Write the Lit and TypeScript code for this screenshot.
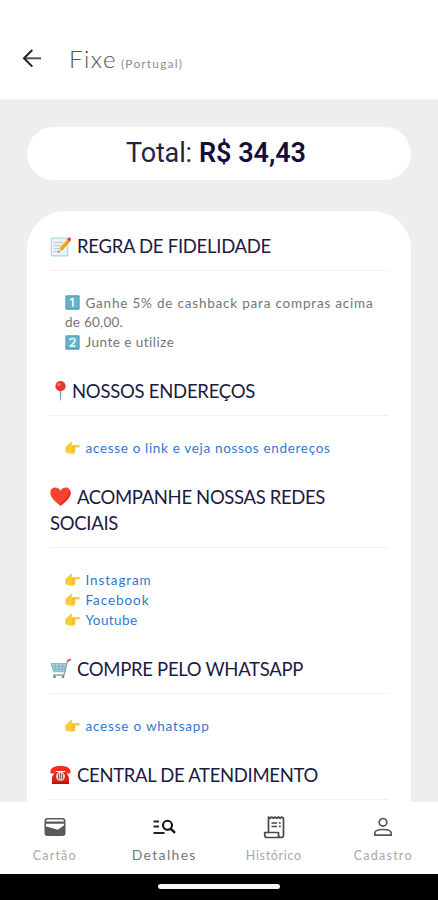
import { LitElement, html, svg, css, nothing, TemplateResult } from "lit";
import { customElement } from "lit/decorators.js";

interface Run { text: string; width: number; icon?: string }
interface Section { heading: Run[]; body: Run[]; kind: "note" | "link" }

const sections: Section[] = [
  {
    kind: "note",
    heading: [{ icon: "memo", text: "REGRA DE FIDELIDADE", width: 194 }],
    body: [
      { icon: "one", text: "Ganhe 5% de cashback para compras acima", width: 288 },
      { text: "de 60,00.", width: 58 },
      { icon: "two", text: "Junte e utilize", width: 89 },
    ],
  },
  {
    kind: "link",
    heading: [{ icon: "pin", text: "NOSSOS ENDEREÇOS", width: 183 }],
    body: [{ icon: "hand", text: "acesse o link e veja nossos endereços", width: 245 }],
  },
  {
    kind: "link",
    heading: [
      { icon: "heart", text: "ACOMPANHE NOSSAS REDES", width: 248 },
      { text: "SOCIAIS", width: 68 },
    ],
    body: [
      { icon: "hand", text: "Instagram", width: 66 },
      { icon: "hand", text: "Facebook", width: 64 },
      { icon: "hand", text: "Youtube", width: 52 },
    ],
  },
  {
    kind: "link",
    heading: [{ icon: "cart", text: "COMPRE PELO WHATSAPP", width: 226 }],
    body: [{ icon: "hand", text: "acesse o whatsapp", width: 124 }],
  },
  {
    kind: "link",
    heading: [{ icon: "phone", text: "CENTRAL DE ATENDIMENTO", width: 241 }],
    body: [],
  },
];

const keycap = (d: string) => svg`
  <rect x=".5" y=".5" width="20" height="20" rx="1.5" fill="#4a9fba"/>
  <rect x="2" y="2" width="17" height="16.5" rx="1" fill="#65b3c9"/>
  <path d=${d} fill="none" stroke="#e8f6fa" stroke-width="2.4" stroke-linejoin="round"/>`;

const glyphs: Record<string, TemplateResult> = {
  memo: svg`
    <rect x=".8" y="1.5" width="17.6" height="19" rx="1" fill="#a9d9e8"/>
    <rect x="2" y="2.6" width="15.2" height="16.6" fill="#e9f3f4"/>
    <path d="M4 6.5h9M4 9.5h7M4 12.5h5M4 15.5h4" stroke="#b3ced6" stroke-width="1"/>
    <path d="M8 16.8 9.3 12 17 3.4l2.7 2.3L12 14.5z" fill="#f9b32b"/>
    <path d="M10.6 13.3 18.3 4.6l1.4 1.1L12 14.5z" fill="#ee9420"/>
    <path d="M8 16.8 9.3 12l2.7 2.5z" fill="#f5d3a0"/><path d="m8 16.8.5-1.9 1.1 1z" fill="#444"/>
    <path d="m17 3.4 1.5-1.8q.6-.6 1.3 0l1.2 1q.6.6 0 1.3l-1.3 1.8z" fill="#e5414c"/>`,
  one: keycap("M7.2 7 11 4.9V16.5"),
  two: keycap("M6.6 7.4Q7.2 4.8 10.4 4.8 14 4.8 14 7.7 14 10 7.2 15.6H14.6"),
  pin: svg`
    <path d="M9.6 10h1.8l-.5 10.4h-.8z" fill="#67a9bf"/>
    <circle cx="10.5" cy="6.2" r="5.1" fill="#e8392f"/>
    <circle cx="9" cy="4.4" r="1.5" fill="#ff8178"/>`,
  heart: svg`
    <path d="M10.5 19.8C6 16.4.4 12.2.4 6.8.4 3.5 2.7 1.6 5.3 1.6c2.3 0 4.3 1.3 5.2 3.4.9-2.1 2.9-3.4 5.2-3.4 2.6 0 4.900 1.900 4.900 5.200 0 5.400-5.600 9.600-10.100 13z" fill="#f8412f"/>
    <path d="M18.7 4.2c.7 5.5-3.4 9.4-8.2 13.2v2.400c4.500-3.400 10.100-7.600 10.100-13 0-1-.6-2-1.900-2.600z" fill="#e32f28"/>`,
  cart: svg`
    <path d="M1 5.500h15.600l-1.900 8.300H3.600z" fill="#a9d4dc"/>
    <path d="M1 5.500h15.600l-1.900 8.300H3.600zM1.700 8.300h14.200M2.600 11h12.600M5 5.500l1 8.300M9 5.500v8.300M13 5.500l-1 8.300" fill="none" stroke="#79afb9" stroke-width=".8"/>
    <path d="M19.500 2.200 17.600 3 14 17H3.400" fill="none" stroke="#8fa5ab" stroke-width="1.300"/>
    <path d="m18 2.700 2.300-1" stroke="#e5565b" stroke-width="2" stroke-linecap="round"/>
    <circle cx="4.500" cy="18.800" r="1.400" fill="#6b8b93"/><circle cx="13" cy="18.800" r="1.400" fill="#6b8b93"/>`,
  phone: svg`
    <path d="M5 8h11l3 5.500V20H2v-6.500z" fill="#e61f16"/>
    <path d="M.5 8.500C.2 4.500 3 2 10.500 2s10.300 2.500 10 6.500c0 .8-.5 1-1.100 1h-3.200c-.8 0-1-.4-1-1.200V7H5.800v1.300c0 .8-.2 1.200-1 1.200H1.600c-.6 0-1.100-.2-1.100-1z" fill="#f22d20"/>
    <path d="M2 17.800h17V20H2z" fill="#b91510"/>
    <circle cx="10.500" cy="12.300" r="4.500" fill="#e9d5d1"/>
    <path d="M8.500 9.800v5.400M10.500 9v6.600M12.500 9.800v5.400" stroke="#7d6664" stroke-width="1.100"/>`,
  hand: svg`
    <path d="M.5 9.400C3 8.300 5 5.600 7.300 3.500c1.500-1.300 3.400-.4 2.700 1.300L9.200 6.900h9.700c2.500 0 2.500 3.600 0 3.600h-5.100c1.500.4 1.500 2.600 0 2.900 1.300.5 1.200 2.500-.3 2.800 1 .7.700 2.600-.9 2.800-3.300.4-6.500.4-8.400-.8L.5 17.500z" fill="#fccb3c"/>
    <path d="M9.500 10.500h4.100M9.600 13.400h4M9.600 16.200h3.700" stroke="#dfa02c" stroke-width=".9"/>`,
};

const emoji = (name?: string) =>
  name ? html`<svg class="emoji ${name}" viewBox="0 0 21 21">${glyphs[name]}</svg>` : nothing;

const tracked = (text: string, width: number, cls = "") =>
  html`<span class="run ${cls}" data-width=${width}>${text}</span>`;

const tabs = [
  { label: "Cartão", width: 44, active: false, icon: svg`
    <path fill-rule="evenodd" fill="#5a5a5a" d="M4.500 3h15A3 3 0 0 1 22.500 6v12a3 3 0 0 1-3 3h-15a3 3 0 0 1-3-3V6a3 3 0 0 1 3-3zM4.500 4.500Q3 4.500 3 6.500h18q0-2-1.500-2zM3 8.800v2.700l11.300 3.100q.7.200 1.300-.3L21 10.200V8.800z"/>` },
  { label: "Detalhes", width: 65, active: true, icon: svg`
    <path fill="none" stroke="#222" stroke-width="2" d="M1.500 6.500h5.500M1.500 11.500h5.500M1.500 18h11"/>
    <circle cx="15.500" cy="10.300" r="4.500" fill="none" stroke="#111" stroke-width="2.100"/>
    <path d="m18.700 13.600 4.300 4.300" stroke="#111" stroke-width="2.300"/>` },
  { label: "Histórico", width: 56, active: false, icon: svg`
    <path fill="none" stroke="#484848" stroke-width="1.700" stroke-linejoin="round" d="M6.500 17.500V2l1.500 1.300L9.700 2l1.700 1.300L13.100 2l1.700 1.300L16.500 2l1.600 1.300L19.600 2 21.500 3.300V20q0 2.500-2.300 2.500H5Q2.700 22.500 2.700 20v-2.500h13.800V20q0 2.500 2.500 2.500"/>
    <path stroke="#484848" stroke-width="1.600" d="M9.500 8h5.500M9.500 11.500h5.500M16.800 8h2M16.800 11.500h2"/>` },
  { label: "Cadastro", width: 59, active: false, icon: svg`
    <g fill="none" stroke="#555" stroke-width="1.700"><circle cx="12" cy="7.300" r="3.800"/>
    <path stroke-linejoin="round" d="M3.800 20.200v-2C3.800 15.600 7.500 14.500 12 14.500s8.200 1.100 8.200 3.700v2z"/></g>` },
];

@customElement("app-root")
export class AppRoot extends LitElement {
  static styles = css`
    :host { display: flex; flex-direction: column; height: 900px; overflow: hidden; background: #eee;
      font-family: Lato, "Open Sans", sans-serif; color: #1b1b42; }
    * { box-sizing: border-box; }
    .run { white-space: pre; display: inline-block; }
    header { flex: none; height: 99px; background: #fff; display: flex; align-items: baseline; padding: 42px 0 0 20px; color: #555; }
    .back { width: 24px; height: 24px; align-self: flex-start; margin: 4px 25px 0 0; }
    .title { font-size: 24px; line-height: 33px; font-weight: 300; margin-right: 4px; }
    .country { font-size: 12px; font-weight: 400; color: #8f8f8f; }
    main { flex: 1; min-height: 0; overflow: hidden; padding: 28px 27px 0; }
    .total { height: 53px; border-radius: 27px; background: #fff; display: flex; justify-content: center; align-items: center;
      gap: 7px; font: 400 27px/53px Roboto, sans-serif; color: #24243f; padding-right: 6px; }
    .amount { font-weight: 600; color: #10103c; }
    .card { margin-top: 31px; height: 620px; border-radius: 38px 38px 0 0; background: #fff; padding: 22px 22px 0 23px; }
    h2 { margin: 0; padding-bottom: 11px; border-bottom: 1px solid #f0f0f1; font-size: 18.500px; font-weight: 400; }
    .line { display: flex; align-items: center; height: 26px; line-height: 26px; }
    .emoji { flex: none; display: block; width: 21px; height: 21px; margin-right: 6px; }
    .pin { margin-right: 1px; }
    .body { padding: 22px 0 26px 15px; font-size: 13.500px; color: #74747c; }
    .body .line { height: 20px; line-height: 20px; }
    .body.note .line { height: 19.670px; }
    .body.link { color: #2f79cf; }
    .body .emoji { width: 15px; height: 15px; margin-right: 5.500px; }
    nav { flex: none; height: 72px; background: #fff; display: grid; grid-template-columns: repeat(4, 109.500px); }
    .tab { display: flex; flex-direction: column; align-items: center; padding-top: 13px; font-size: 12.500px; color: #a8a8a8; }
    .tab svg { width: 24px; height: 24px; flex: none; }
    .tab .run { line-height: 18px; margin-top: 8px; }
    .tab.active { font-size: 14px; color: #777; }
    .tab.active .run { margin-top: 7px; }
    .system { flex: none; height: 26px; background: #000; display: flex; justify-content: center; padding-top: 10px; }
    .home { width: 122px; height: 5px; border-radius: 3px; background: #f5f5f5; }
  `;

  /** Spreads the letters of each run over its nominal width. */
  protected firstUpdated() {
    this.renderRoot.querySelectorAll<HTMLElement>(".run").forEach((el) => {
      const extra = Number(el.dataset.width) - el.getBoundingClientRect().width;
      const count = (el.textContent ?? "").length;
      el.style.letterSpacing = `${extra / count}px`;
    });
  }

  render() {
    return html`
      <header>
        <svg class="back" viewBox="0 0 24 24" fill="none" stroke="#222" stroke-width="2">
          <path d="M21 12.300H5" stroke="#555"/><path d="m12.300 4-8.300 8.300 8.300 8.300"/>
        </svg>
        ${tracked("Fixe", 48, "title")}${tracked("(Portugal)", 62, "country")}
      </header>
      <main>
        <div class="total">${tracked("Total:", 66)}${tracked("R$ 34,43", 107, "amount")}</div>
        <div class="card">
          ${sections.map((s) => html`
            <section>
              <h2>${s.heading.map((r) => html`<div class="line">${emoji(r.icon)}${tracked(r.text, r.width)}</div>`)}</h2>
              <div class="body ${s.kind}">
                ${s.body.map((r) => html`<div class="line">${emoji(r.icon)}${tracked(r.text, r.width)}</div>`)}
              </div>
            </section>`)}
        </div>
      </main>
      <nav>
        ${tabs.map((t) => html`
          <div class="tab ${t.active ? "active" : ""}">
            <svg viewBox="0 0 24 24">${t.icon}</svg>${tracked(t.label, t.width)}
          </div>`)}
      </nav>
      <div class="system"><div class="home"></div></div>`;
  }
}
